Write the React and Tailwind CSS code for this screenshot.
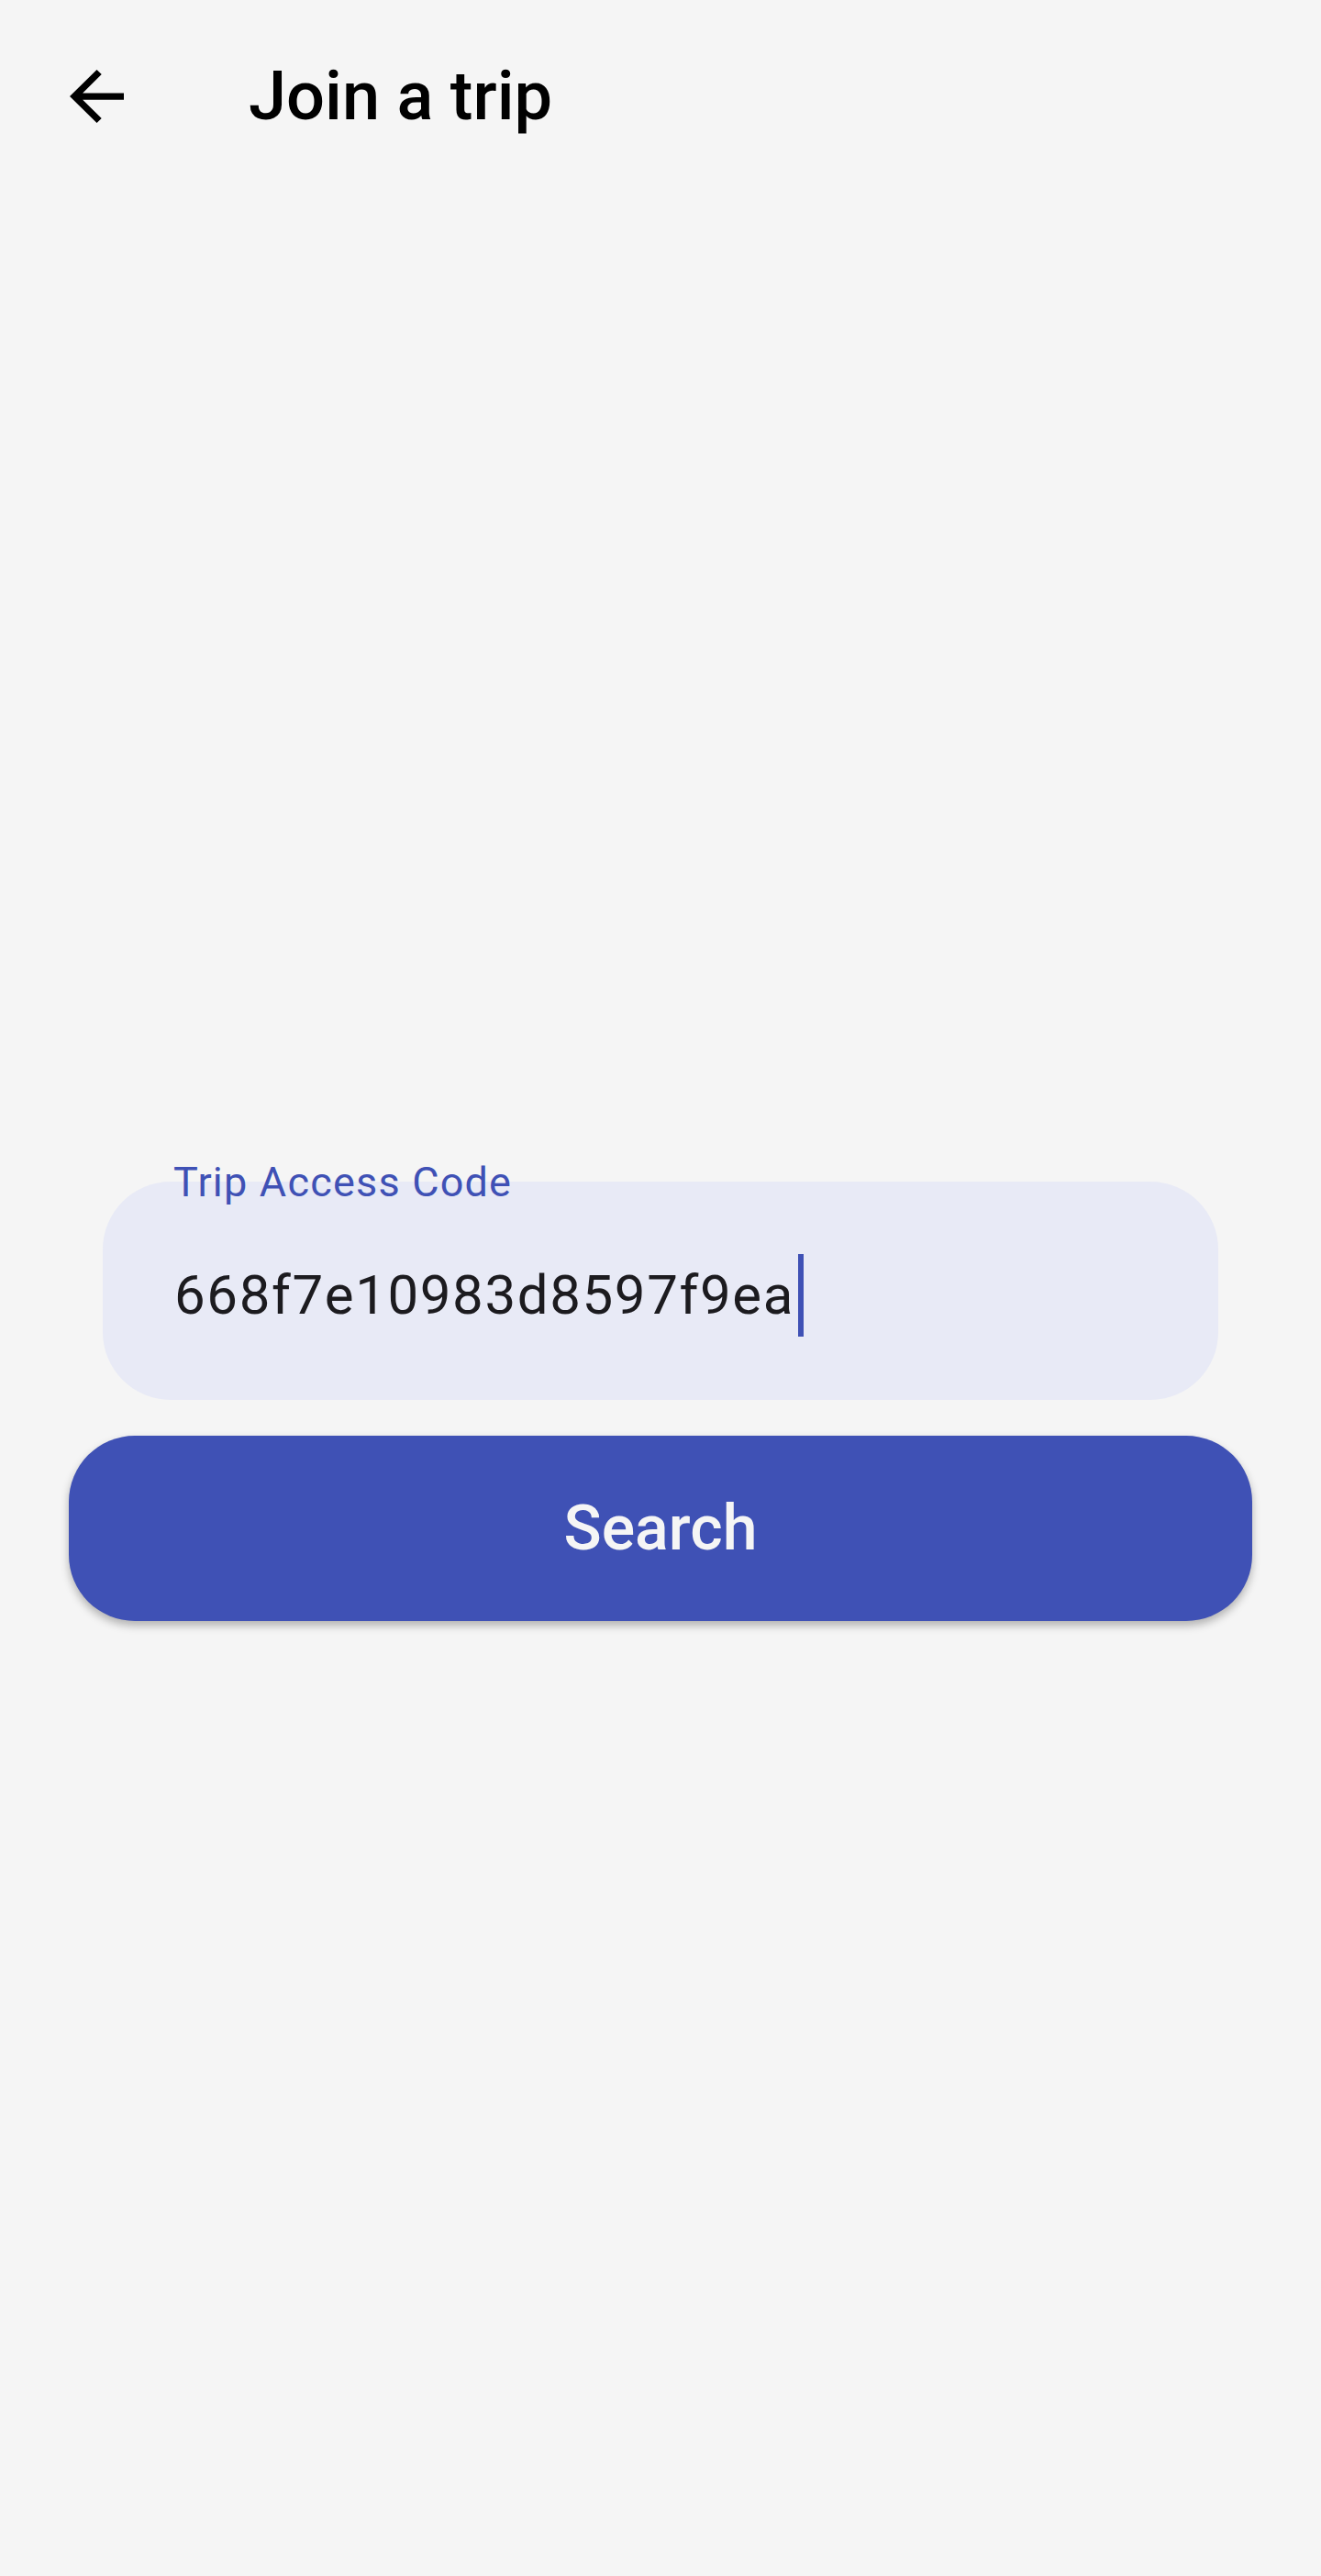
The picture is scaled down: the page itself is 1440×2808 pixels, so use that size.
export default function App() {
  return (
    <div className="min-h-[2808px] w-full bg-[#f5f5f5] font-['Roboto',_'Liberation_Sans',_sans-serif] text-black">
      <header className="flex h-[210px] items-center">
        <button type="button" className="ml-[76px] flex items-center" aria-label="Back">
          <svg width="59" height="58" viewBox="4 4 16 16" preserveAspectRatio="none">
            <path
              d="M20 11H7.83l5.59-5.59L12 4l-8 8 8 8 1.41-1.41L7.83 13H20v-2z"
              fill="#000"
            />
          </svg>
        </button>
        <h1 className="ml-[136px] text-[74px] leading-none font-medium">Join a trip</h1>
      </header>

      <main className="flex flex-col pt-[1078px]">
        <div className="relative mx-[112px]">
          <span className="absolute left-[77px] top-0 -translate-y-1/2 text-[45px] leading-none tracking-[1.2px] text-[#3f51b5]">
            Trip Access Code
          </span>
          <div className="flex h-[238px] items-center rounded-[74px] bg-[#e8eaf6] pl-[78px] pt-[10px]">
            <span className="text-[60px] leading-none tracking-[1.6px] text-[#1c1b1f]">
              668f7e10983d8597f9ea
            </span>
            <span className="ml-[4px] h-[90px] w-[6px] bg-[#3f51b5]" />
          </div>
        </div>

        <button
          type="button"
          className="mx-[75px] mt-[39px] flex h-[202px] items-center justify-center rounded-[72px] bg-[#3f51b5] text-[68px] font-medium text-[#f5f5f5] shadow-[0_5px_10px_rgba(0,0,0,0.28)]"
        >
          Search
        </button>
      </main>
    </div>
  );
}
